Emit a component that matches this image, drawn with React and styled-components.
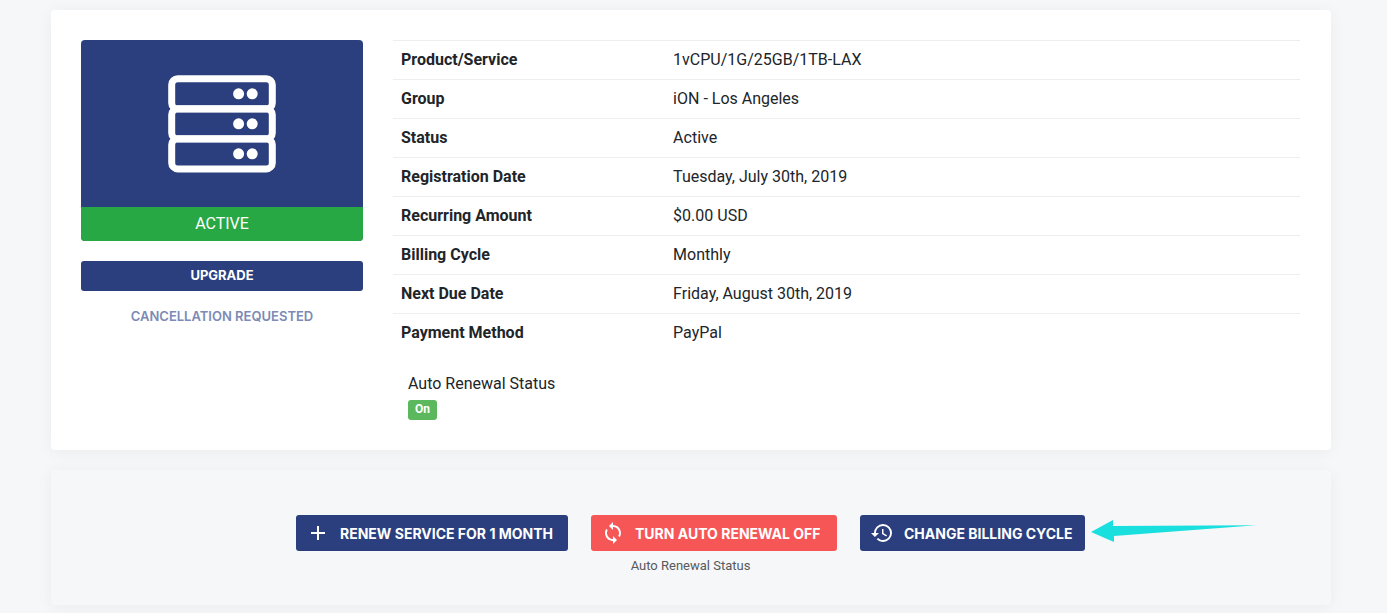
import React from "react";
import styled, { createGlobalStyle } from "styled-components";
import { MdAdd, MdHistory, MdSync } from "react-icons/md";

const GlobalStyle = createGlobalStyle`
	* {
		box-sizing: border-box;
	}

	body {
		margin: 0;
		background: #f5f7f9;
		color: #212529;
		font-family: Roboto, sans-serif;
		font-size: 16px;
		line-height: 24px;
	}
`;

const Page = styled.main`
	display: flex;
	flex-direction: column;
	gap: 20px;
	padding: 10px 56px 8px 51px;
`;

const Card = styled.section`
	border-radius: 4px;
	box-shadow: 0 2px 16px rgba(0, 0, 0, 0.05);
`;

const DetailsCard = styled(Card)`
	display: flex;
	align-items: flex-start;
	gap: 30px;
	padding: 30px 31px 30px 30px;
	background: #ffffff;
`;

const ActionsCard = styled(Card)`
	display: flex;
	flex-direction: column;
	align-items: center;
	gap: 5px;
	padding: 45px 31px 29px 30px;
`;

const Actions = styled.div`
	display: flex;
	gap: 23px;
`;

const Sidebar = styled.div`
	display: flex;
	flex-direction: column;
	flex: 0 0 282px;
`;

const Product = styled.div`
	overflow: hidden;
	margin-bottom: 20px;
	border-radius: 4px;
	background: #2b3f7e;
	color: #ffffff;
	text-align: center;
`;

const ProductIcon = styled.div`
	display: flex;
	justify-content: center;
	padding: 34px 0;
`;

const ProductStatus = styled.div`
	padding: 5px 0;
	background: #28a745;
`;

const Button = styled.button`
	display: flex;
	justify-content: center;
	align-items: center;
	border: none;
	border-radius: 3px;
	background: ${({ $danger }) => ($danger ? "#f65656" : "#2b3f7e")};
	color: #ffffff;
	font-family: Inter, sans-serif;
	font-weight: 700;
	cursor: pointer;
`;

const UpgradeButton = styled(Button)`
	height: 30px;
	padding: 0 10px 2px;
	font-size: 13px;
`;

const ActionButton = styled(Button)`
	justify-content: flex-start;
	gap: 10px;
	width: ${({ $width }) => $width}px;
	height: 36px;
	padding: 0 10px;
	font-size: 14px;
	white-space: nowrap;

	svg {
		flex: none;
	}
`;

const CancelNote = styled.p`
	margin: 13px 0 0;
	color: #7c8ab5;
	font-family: Inter, sans-serif;
	font-size: 13px;
	font-weight: 600;
	text-align: center;
`;

const Details = styled.div`
	flex: 1;
	min-width: 0;
`;

const Table = styled.table`
	width: 100%;
	border-collapse: separate;
	border-spacing: 0;
	table-layout: fixed;

	th,
	td {
		padding: 7px 8px;
		border-top: 1px solid #eeeeee;
		text-align: left;
	}

	th {
		width: 30%;
		font-weight: 700;
	}
`;

const Renewal = styled.div`
	display: flex;
	flex-direction: column;
	align-items: flex-start;
	gap: 4px;
	padding: 20px 15px 0;
`;

const Badge = styled.span`
	padding: 0 7px 2px;
	border-radius: 3px;
	background: #5cb85c;
	color: #ffffff;
	font-size: 12px;
	font-weight: 700;
	line-height: 18px;
`;

const PointedAction = styled.div`
	position: relative;
`;

const Caption = styled.div`
	color: #58595b;
	font-size: 13px;
	line-height: 20px;
`;

const Pointer = styled.svg`
	position: absolute;
	top: 4px;
	left: 100%;
`;

const details = [
	["Product/Service", "1vCPU/1G/25GB/1TB-LAX"],
	["Group", "iON - Los Angeles"],
	["Status", "Active"],
	["Registration Date", "Tuesday, July 30th, 2019"],
	["Recurring Amount", "$0.00 USD"],
	["Billing Cycle", "Monthly"],
	["Next Due Date", "Friday, August 30th, 2019"],
	["Payment Method", "PayPal"],
];

const ServerIcon = () => (
	<svg width="108" height="99" viewBox="0 0 108 99" aria-hidden="true">
		{[0, 30, 60].map((y) => (
			<g key={y}>
				<rect
					x="3.7"
					y={y + 4.7}
					width="100.6"
					height="30.2"
					rx="6"
					fill="none"
					stroke="#ffffff"
					strokeWidth="7"
				/>
				<circle cx="70.6" cy={y + 19.8} r="5.5" fill="#ffffff" />
				<circle cx="84.2" cy={y + 19.8} r="5.5" fill="#ffffff" />
			</g>
		))}
	</svg>
);

const App = () => {
	return (
		<>
			<GlobalStyle />
			<Page>
				<DetailsCard>
					<Sidebar>
						<Product>
							<ProductIcon>
								<ServerIcon />
							</ProductIcon>
							<ProductStatus>ACTIVE</ProductStatus>
						</Product>
						<UpgradeButton type="button">UPGRADE</UpgradeButton>
						<CancelNote>CANCELLATION REQUESTED</CancelNote>
					</Sidebar>
					<Details>
						<Table>
							<tbody>
								{details.map(([label, value]) => (
									<tr key={label}>
										<th scope="row">{label}</th>
										<td>{value}</td>
									</tr>
								))}
							</tbody>
						</Table>
						<Renewal>
							<span>Auto Renewal Status</span>
							<Badge>On</Badge>
						</Renewal>
					</Details>
				</DetailsCard>
				<ActionsCard>
					<Actions>
						<ActionButton type="button" $width={272}>
							<MdAdd size={24} />
							RENEW SERVICE FOR 1 MONTH
						</ActionButton>
						<ActionButton type="button" $width={246} $danger>
							<MdSync size={24} />
							TURN AUTO RENEWAL OFF
						</ActionButton>
						<PointedAction>
							<ActionButton type="button" $width={225}>
								<MdHistory size={24} />
								CHANGE BILLING CYCLE
							</ActionButton>
							<Pointer width="172" height="28" viewBox="0 0 172 28" aria-hidden="true">
								<path d="M6 13 28 1V7L171 6.3 29 17V23Z" fill="#1adfdf" />
							</Pointer>
						</PointedAction>
					</Actions>
					<Caption>Auto Renewal Status</Caption>
				</ActionsCard>
			</Page>
		</>
	);
};

export default App;
